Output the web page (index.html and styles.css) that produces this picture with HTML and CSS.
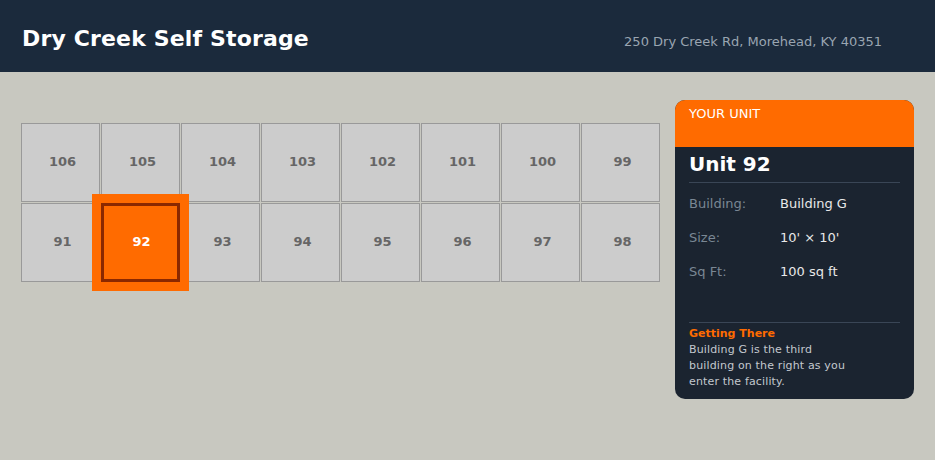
FILE: index.html
```html
<!DOCTYPE html>
<html>
<head>
<meta charset="utf-8">
<link rel="stylesheet" href="styles.css">
</head>
<body>
<header class="topbar">
  <h1 class="title">Dry Creek Self Storage</h1>
  <div class="address">250 Dry Creek Rd, Morehead, KY 40351</div>
</header>
<main class="main">
  <section class="map">
    <div class="grid">
      <div class="cell">106</div>
      <div class="cell">105</div>
      <div class="cell">104</div>
      <div class="cell">103</div>
      <div class="cell">102</div>
      <div class="cell">101</div>
      <div class="cell">100</div>
      <div class="cell">99</div>
      <div class="cell">91</div>
      <div class="cell selected">92</div>
      <div class="cell">93</div>
      <div class="cell">94</div>
      <div class="cell">95</div>
      <div class="cell">96</div>
      <div class="cell">97</div>
      <div class="cell">98</div>
    </div>
  </section>
  <aside class="card">
    <div class="card-head">YOUR UNIT</div>
    <div class="card-body">
      <h2 class="unit">Unit 92</h2>
      <div class="row"><span class="label">Building:</span><span class="value">Building G</span></div>
      <div class="row"><span class="label">Size:</span><span class="value">10' × 10'</span></div>
      <div class="row"><span class="label">Sq Ft:</span><span class="value">100 sq ft</span></div>
      <div class="directions">
        <div class="dir-title">Getting There</div>
        <p class="dir-text">Building G is the third building on the right as you enter the facility.</p>
      </div>
    </div>
  </aside>
</main>
</body>
</html>
```
FILE: styles.css
```css
* { box-sizing: border-box; }
html, body { margin: 0; padding: 0; }
body {
  background: #c8c8c0;
  font-family: "DejaVu Sans", sans-serif;
  width: 935px;
  height: 460px;
  overflow: hidden;
}
.topbar {
  height: 72px;
  background: #1b2a3c;
  display: flex;
  align-items: baseline;
  justify-content: space-between;
  padding: 26px 53px 0 22px;
}
.title {
  margin: 0;
  color: #ffffff;
  font-size: 22px;
  font-weight: bold;
  line-height: 26px;
  letter-spacing: 0.15px;
}
.address {
  color: #9aa5b1;
  font-size: 13px;
}
.main {
  display: flex;
  gap: 15px;
  padding: 28px 21px;
  align-items: flex-start;
}
.map {
  flex: 1;
  padding-top: 23px;
}
.grid {
  display: grid;
  grid-template-columns: repeat(8, 79px);
  grid-auto-rows: 79px;
  gap: 1px;
}
.cell {
  background: #cccccc;
  border: 1px solid #999999;
  display: flex;
  align-items: center;
  justify-content: center;
  padding: 0 0 3px 4px;
  color: #666666;
  font-size: 13px;
  font-weight: bold;
}
.cell.selected {
  position: relative;
  z-index: 2;
  background: #ff6b00;
  border: 3px solid #8b2800;
  box-shadow: 0 0 0 9px #ff6b00;
  color: #ffffff;
  padding: 0 0 3px 2px;
}
.card {
  width: 239px;
  background: #1b2430;
  border-radius: 10px;
  overflow: hidden;
}
.card-head {
  height: 47px;
  background: #ff6b00;
  color: #ffffff;
  font-size: 13px;
  padding: 6px 14px 0;
  line-height: 15px;
}
.card-body {
  padding: 6px 14px 9px;
}
.unit {
  margin: 0;
  color: #ffffff;
  font-size: 20px;
  font-weight: bold;
  line-height: 23px;
  padding-bottom: 6px;
  border-bottom: 1px solid #3a4656;
  margin-bottom: 3px;
}
.row {
  height: 34px;
  display: flex;
  align-items: center;
  font-size: 13px;
}
.label {
  width: 91px;
  color: #7a8794;
}
.value {
  color: #e8e8e8;
}
.directions {
  margin-top: 34px;
  border-top: 1px solid #3a4656;
  padding-top: 3px;
}
.dir-title {
  color: #ff6b00;
  font-size: 11px;
  font-weight: bold;
  line-height: 16px;
}
.dir-text {
  margin: 0;
  color: #c3c8ce;
  font-size: 11px;
  line-height: 16px;
  letter-spacing: 0.15px;
  max-width: 170px;
}
```
